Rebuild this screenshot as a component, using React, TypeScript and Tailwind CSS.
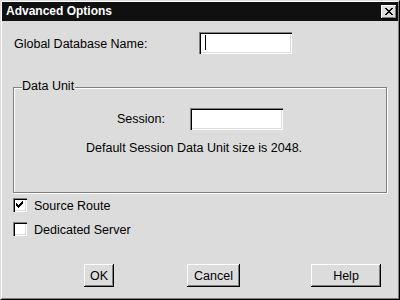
import React from "react";

const sunken =
  "shadow-[inset_1px_1px_0_#808080,inset_2px_2px_0_#000,inset_-1px_-1px_0_#fff,inset_-2px_-2px_0_#dcdcdc]";
const raised =
  "shadow-[inset_-1px_-1px_0_#000,inset_1px_1px_0_#fff,inset_-2px_-2px_0_#808080]";

function CheckGlyph() {
  return (
    <svg width="7" height="7" viewBox="0 0 7 7" shapeRendering="crispEdges">
      <path
        d="M6 0h1v3h-1zM5 1h1v3h-1zM4 2h1v3h-1zM3 3h1v3h-1zM2 4h1v3h-1zM1 3h1v3h-1zM0 2h1v3h-1z"
        fill="#000"
      />
    </svg>
  );
}

function CloseGlyph() {
  return (
    <svg width="8" height="7" viewBox="0 0 8 7" shapeRendering="crispEdges">
      <path
        d="M0 0h2v1h-2zM6 0h2v1h-2zM1 1h2v1h-2zM5 1h2v1h-2zM2 2h4v1h-4zM3 3h2v1h-2zM2 4h4v1h-4zM1 5h2v1h-2zM5 5h2v1h-2zM0 6h2v1h-2zM6 6h2v1h-2z"
        fill="#000"
      />
    </svg>
  );
}

function Checkbox({ checked, label }: { checked: boolean; label: string }) {
  return (
    <div className="flex items-center h-[14px] ml-[11px] gap-[7px]">
      <div className={`w-[14px] h-[14px] bg-white ${sunken} pl-[3px] pt-[3px]`}>
        {checked && <CheckGlyph />}
      </div>
      <span className="leading-[15px] pt-[2px]">{label}</span>
    </div>
  );
}

function Button({ label, w }: { label: string; w: string }) {
  return (
    <div className={`${w} h-[23px] ${raised} bg-[#dcdcdc] flex items-center justify-center leading-[15px] pt-[1px]`}>
      {label}
    </div>
  );
}

export default function App() {
  return (
    <div className="w-[400px] h-[300px] bg-[#dcdcdc] border border-t-[#dcdcdc] border-l-[#dcdcdc] border-r-black border-b-black font-['Liberation_Sans',Arial,sans-serif] text-[12.5px] text-black">
      <div className="h-full border border-t-white border-l-white border-r-[#808080] border-b-[#808080] flex flex-col">
        <div className="h-[19px] bg-[#101010] flex items-center justify-between pl-[4px] pr-[1px]">
          <span className="text-white font-bold text-[12px] leading-[15px]">Advanced Options</span>
          <div className={`w-[16px] h-[14px] bg-[#dcdcdc] ${raised} flex items-center justify-center pb-[1px] pr-[1px]`}>
            <CloseGlyph />
          </div>
        </div>
        <div className="flex-1 flex flex-col">
          <div className="flex items-start mt-[11px] pl-[12px]">
            <span className="w-[185px] leading-[15px] mt-[5px]">Global Database Name:</span>
            <div className={`w-[93px] h-[22px] bg-white ${sunken} pl-[6px] pt-[3px]`}>
              <div className="w-px h-[15px] bg-black" />
            </div>
          </div>

          <div className="relative mt-[33px] ml-[11px] w-[374px] h-[106px] border border-[#808080] shadow-[inset_1px_1px_0_#fff,1px_1px_0_#fff]">
            <span className="absolute left-[8px] top-[-9px] bg-[#dcdcdc] leading-[15px] pr-[1px]">Data Unit</span>
            <div className="flex items-center justify-center gap-[25px] mt-[20px]">
              <span className="leading-[15px] pt-[1px]">Session:</span>
              <div className={`w-[93px] h-[22px] bg-white ${sunken}`} />
            </div>
            <div className="mt-[11px] ml-[72px] leading-[15px]">Default Session Data Unit size is 2048.</div>
          </div>

          <div className="mt-[5px] flex flex-col gap-[10px]">
            <Checkbox checked label="Source Route" />
            <Checkbox checked={false} label="Dedicated Server" />
          </div>

          <div className="flex mt-[28px] ml-[82px]">
            <Button label="OK" w="w-[30px]" />
            <div className="ml-[73px]">
              <Button label="Cancel" w="w-[53px]" />
            </div>
            <div className="ml-[71px]">
              <Button label="Help" w="w-[70px]" />
            </div>
          </div>
        </div>
      </div>
    </div>
  );
}
